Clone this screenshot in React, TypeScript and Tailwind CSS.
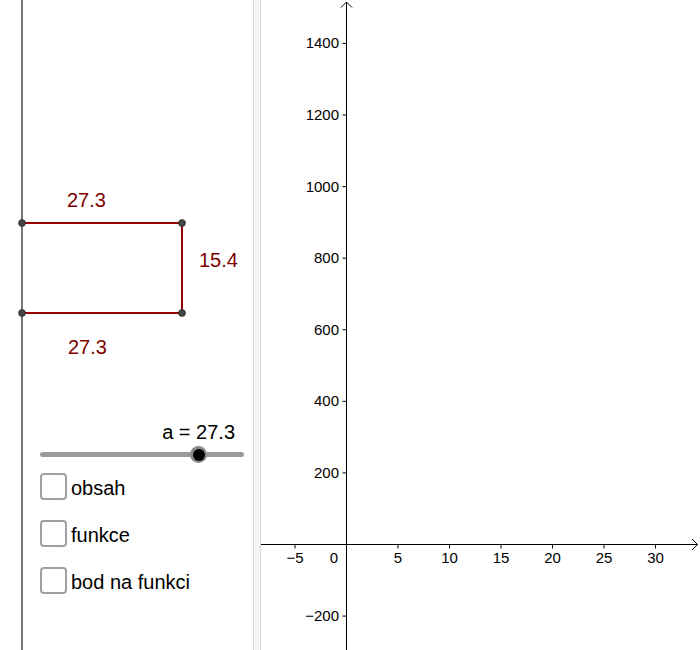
import React from "react";

const FONT = { fontFamily: '"Liberation Sans", Arial, sans-serif' };

function LeftCanvas() {
  const red = "#990000";
  const txt = "#800000";
  return (
    <svg className="absolute inset-0" width={253} height={650} viewBox="0 0 253 650">
      <line x1={22} y1={0} x2={22} y2={650} stroke="#767676" strokeWidth={2} />
      <line x1={22} y1={223} x2={182} y2={223} stroke={red} strokeWidth={2} />
      <line x1={182} y1={223} x2={182} y2={313} stroke={red} strokeWidth={2} />
      <line x1={22} y1={313} x2={182} y2={313} stroke={red} strokeWidth={2} />
      {[
        [22, 223],
        [182, 223],
        [22, 313],
        [182, 313],
      ].map(([x, y], i) => (
        <circle key={i} cx={x} cy={y} r={3.5} fill="#444" stroke="#222" strokeWidth={0.6} />
      ))}
      <g fill={txt} fontSize={20} style={FONT}>
        <text x={67} y={207}>27.3</text>
        <text x={199} y={267}>15.4</text>
        <text x={68} y={354}>27.3</text>
      </g>
    </svg>
  );
}

function Check({ label }: { label: string }) {
  return (
    <div className="flex items-center h-[27px]">
      <div className="w-[27px] h-[27px] border-2 border-[#a0a0a0] rounded-[4px] bg-white shrink-0" />
      <span className="ml-[4px] text-[20px] leading-[24px] text-black pt-[2px]">{label}</span>
    </div>
  );
}

function LeftPanel() {
  return (
    <div className="relative w-[253px] h-[650px] shrink-0 bg-white">
      <LeftCanvas />
      <div className="relative flex flex-col pl-[40px] pt-[420px]">
        <div className="w-[204px] text-right pr-[9px] text-[20px] leading-[24px] text-black">a = 27.3</div>
        <div className="relative mt-[8px] h-[5px] w-[204px] rounded-full bg-[#9a9a9a]">
          <div className="absolute left-[150px] top-[-6px] w-[17px] h-[17px] rounded-full bg-[#8a8a8a] flex items-center justify-center">
            <div className="w-[12px] h-[12px] rounded-full bg-black" />
          </div>
        </div>
        <div className="mt-[16px] flex flex-col gap-[20px]">
          <Check label="obsah" />
          <Check label="funkce" />
          <Check label="bod na funkci" />
        </div>
      </div>
    </div>
  );
}

function RightPanel() {
  const ox = 346.5;
  const oy = 544.5;
  const sx = 10.3;
  const sy = 0.3579;
  const yVals = [1400, 1200, 1000, 800, 600, 400, 200, -200];
  const xVals = [-5, 5, 10, 15, 20, 25, 30];
  return (
    <div className="w-[439px] h-[650px] bg-white">
      <svg width={439} height={650} viewBox="0 0 439 650">
        <g transform="translate(-261,0)" style={FONT}>
          <line x1={ox} y1={2} x2={ox} y2={650} stroke="#000" strokeWidth={1} />
          <polyline points="341,7.5 346.5,2 352,7.5" fill="none" stroke="#000" strokeWidth={1} />
          <line x1={261} y1={oy} x2={697.5} y2={oy} stroke="#000" strokeWidth={1} />
          <polyline points="692,539 697.5,544.5 692,550" fill="none" stroke="#000" strokeWidth={1} />
          {yVals.map((v) => {
            const y = oy - v * sy;
            return (
              <g key={v}>
                <line x1={ox - 4} y1={y} x2={ox} y2={y} stroke="#000" strokeWidth={1} />
                <text x={339} y={y + 5} fontSize={15} textAnchor="end" fill="#000">
                  {v < 0 ? "\u2212" + Math.abs(v) : v}
                </text>
              </g>
            );
          })}
          {xVals.map((v) => {
            const x = ox + v * sx;
            return (
              <g key={v}>
                <line x1={x} y1={oy} x2={x} y2={oy + 4} stroke="#000" strokeWidth={1} />
                <text x={x} y={563} fontSize={15} textAnchor="middle" fill="#000">
                  {v < 0 ? "\u2212" + Math.abs(v) : v}
                </text>
              </g>
            );
          })}
          <text x={338} y={563} fontSize={15} textAnchor="end" fill="#000">0</text>
        </g>
      </svg>
    </div>
  );
}

export default function App() {
  return (
    <div className="flex w-[700px] h-[650px] overflow-hidden bg-white" style={FONT}>
      <LeftPanel />
      <div className="w-[8px] h-[650px] shrink-0 bg-[#f5f5f5] border-x border-[#dadada]" />
      <RightPanel />
    </div>
  );
}
